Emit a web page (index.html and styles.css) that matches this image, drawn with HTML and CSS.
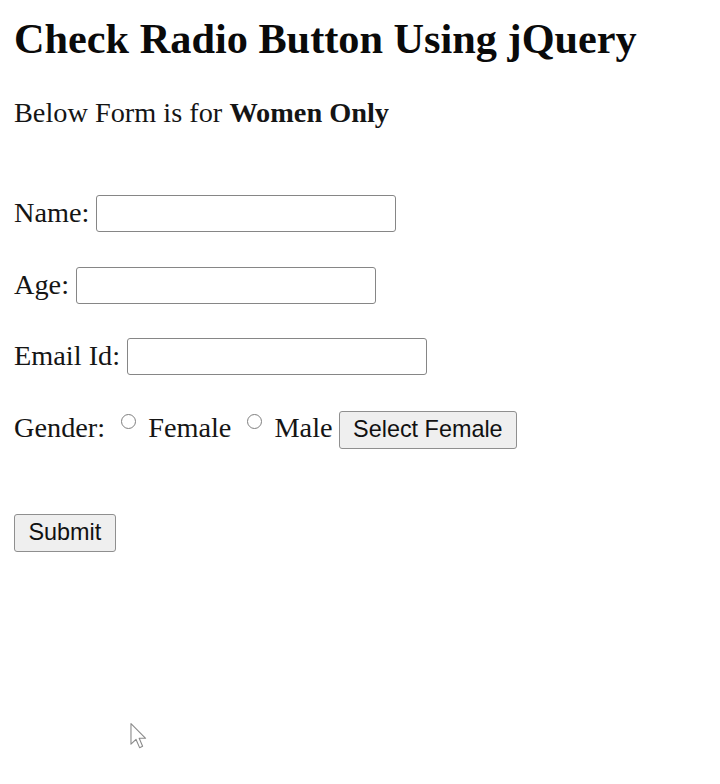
FILE: index.html
```html
<!DOCTYPE html>
<html lang="en">
<head>
<meta charset="utf-8">
<title>Check Radio Button Using jQuery</title>
<link rel="stylesheet" href="styles.css">
</head>
<body>
  <h2 class="title">Check Radio Button Using jQuery</h2>
  <p class="intro">Below Form is for <b>Women Only</b></p>
  <form class="form">
    <div class="row">
      <label class="label" for="name">Name:</label>
      <input class="field" id="name" type="text">
    </div>
    <div class="row row-next">
      <label class="label" for="age">Age:</label>
      <input class="field" id="age" type="text">
    </div>
    <div class="row row-next">
      <label class="label" for="email">Email Id:</label>
      <input class="field" id="email" type="text">
    </div>
    <div class="row gender-row">
      <span class="label">Gender:</span>
      <input class="radio" type="radio" name="gender" id="female">
      <label class="label" for="female">Female</label>
      <input class="radio" type="radio" name="gender" id="male">
      <label class="label" for="male">Male</label>
      <button class="btn btn-select" type="button">Select Female</button>
    </div>
    <div class="submit-row">
      <button class="btn" type="button">Submit</button>
    </div>
  </form>
  <svg class="cursor" width="17" height="26" viewBox="0 0 12 19" aria-hidden="true">
    <path d="M0.5 0.5 L0.5 15.5 L4.2 12 L6.8 18 L9 17 L6.5 11.2 L11.2 11.2 Z" fill="#fff" stroke="#8a8a8a" stroke-width="0.8" stroke-linejoin="round"/>
  </svg>
</body>
</html>
```

FILE: styles.css
```css
html, body {
  margin: 0;
  background: #ffffff;
}

body {
  padding: 0 0 0 14px;
  font-family: "Liberation Serif", "Times New Roman", serif;
  font-size: 28.3px;
  color: #151515;
  position: relative;
  min-height: 784px;
  box-sizing: border-box;
}

.title {
  margin: 15px 0 0;
  font-size: 42.3px;
  line-height: 48px;
  font-weight: 700;
  color: #0a0a0a;
}

.intro {
  margin: 34px 0 0;
  line-height: 31px;
}

.intro b {
  font-weight: 700;
}

.form {
  margin: 67px 0 0;
}

.row {
  display: flex;
  align-items: flex-start;
  height: 37px;
}

.row-next {
  margin-top: 34.5px;
}

.label {
  line-height: 31px;
  margin-top: 2px;
  white-space: nowrap;
}

.field {
  box-sizing: border-box;
  width: 300px;
  height: 37px;
  margin: 0 0 0 7px;
  padding: 0 4px;
  border: 1.5px solid #868686;
  border-radius: 3px;
  background: #ffffff;
  font-family: "Liberation Sans", Arial, sans-serif;
  font-size: 23px;
}

.gender-row {
  margin-top: 36px;
  height: 38px;
}

.gender-row .label {
  margin-top: 1px;
}

.radio {
  appearance: none;
  -webkit-appearance: none;
  box-sizing: border-box;
  width: 15px;
  height: 15px;
  min-width: 15px;
  margin: 3px 12px 0 16px;
  padding: 0;
  border: 1.4px solid #7f7f7f;
  border-radius: 50%;
  background: #ffffff;
  flex: none;
}

.btn {
  box-sizing: border-box;
  height: 38px;
  padding: 0 13.5px;
  border: 1.5px solid #8f8f8f;
  border-radius: 3px;
  background: #efefef;
  color: #111111;
  font-family: "Liberation Sans", Arial, sans-serif;
  font-size: 23.4px;
  line-height: 1;
}

.btn-select {
  margin-left: 6px;
}

.submit-row {
  margin-top: 65px;
  display: flex;
}

.cursor {
  position: absolute;
  left: 130px;
  top: 723px;
}
```
